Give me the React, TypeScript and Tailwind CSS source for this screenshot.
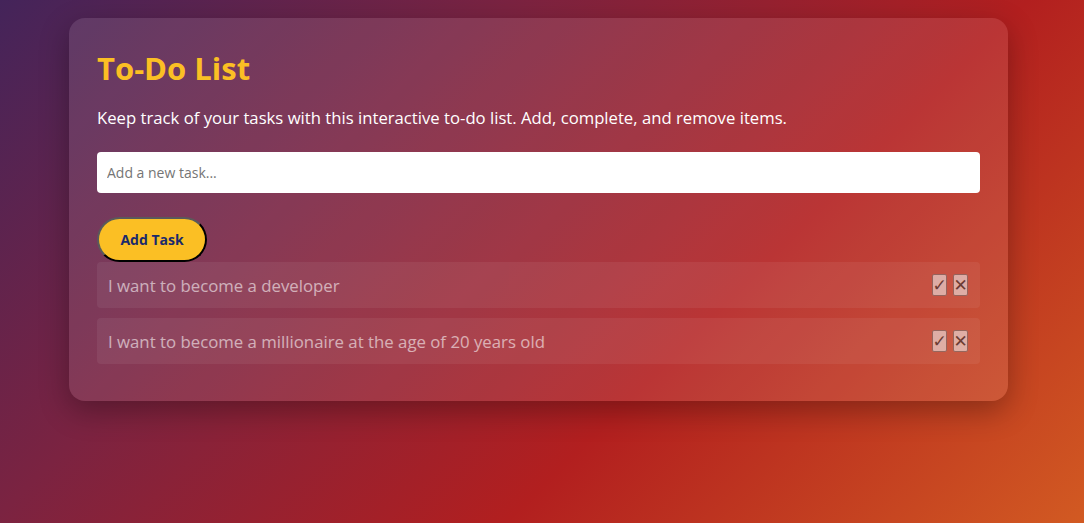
import { useState } from "react";

type Task = { id: number; text: string; done: boolean };

export default function App() {
  const [tasks, setTasks] = useState<Task[]>([
    { id: 1, text: "I want to become a developer", done: false },
    { id: 2, text: "I want to become a millionaire at the age of 20 years old", done: false },
  ]);
  const [value, setValue] = useState("");

  const addTask = () => {
    if (!value.trim()) return;
    setTasks([...tasks, { id: Date.now(), text: value.trim(), done: false }]);
    setValue("");
  };

  return (
    <div
      className="min-h-screen bg-[linear-gradient(135deg,#44245a_0%,#7b2341_32%,#b21f1f_64%,#d25a22_100%)] pl-[69px] pt-[18px]"
      style={{ fontFamily: '"Open Sans", "Noto Sans", sans-serif' }}
    >
      <div className="w-[939px] rounded-2xl bg-white/10 px-7 pt-[32px] pb-[37px] shadow-[0_10px_30px_rgba(0,0,0,0.3)]">
        {/* header */}
        <h1 className="text-[31px] leading-[36px] font-bold text-[#fbbf24]">To-Do List</h1>
        <p className="mt-[20px] text-[16.7px] leading-6 text-white">
          Keep track of your tasks with this interactive to-do list. Add, complete, and remove items.
        </p>

        <input
          className="mt-[22px] block h-[41px] w-full rounded-[4px] bg-white px-[10px] text-[14px] text-gray-800 placeholder:text-[#757575] outline-none"
          placeholder="Add a new task..."
          value={value}
          onChange={(e) => setValue(e.target.value)}
          onKeyDown={(e) => e.key === "Enter" && addTask()}
        />

        <button
          onClick={addTask}
          className="mt-6 block h-[45px] w-[110px] rounded-full border-2 border-t-[#5a5a5a] border-l-[#5a5a5a] border-r-black border-b-black bg-[#fbbf24] text-[14px] font-bold text-[#1a2a6c]"
        >
          Add Task
        </button>

        {/* list */}
        <ul className="flex flex-col gap-[10px]">
          {tasks.map((t) => (
            <li
              key={t.id}
              className={`flex h-[46px] items-center justify-between rounded-[4px] bg-white/10 pl-[11px] pr-[12px] opacity-60 ${t.done ? "line-through" : ""}`}
            >
              <span className="pt-[2px] text-[16.8px] text-white">{t.text}</span>
              <div className="flex gap-[6px]">
                <button
                  onClick={() => setTasks(tasks.map((x) => (x.id === t.id ? { ...x, done: !x.done } : x)))}
                  className="flex h-[22px] w-[15px] items-center justify-center overflow-hidden rounded-[2px] border border-[#767676] bg-[#efefef] p-0 text-[17px] leading-none text-[#333]"
                  style={{ fontFamily: '"DejaVu Sans", sans-serif' }}
                >
                  ✓
                </button>
                <button
                  onClick={() => setTasks(tasks.filter((x) => x.id !== t.id))}
                  className="flex h-[22px] w-[15px] items-center justify-center overflow-hidden rounded-[2px] border border-[#767676] bg-[#efefef] p-0 text-[17px] leading-none text-[#333]"
                  style={{ fontFamily: '"DejaVu Sans", sans-serif' }}
                >
                  ✕
                </button>
              </div>
            </li>
          ))}
        </ul>
      </div>
    </div>
  );
}
